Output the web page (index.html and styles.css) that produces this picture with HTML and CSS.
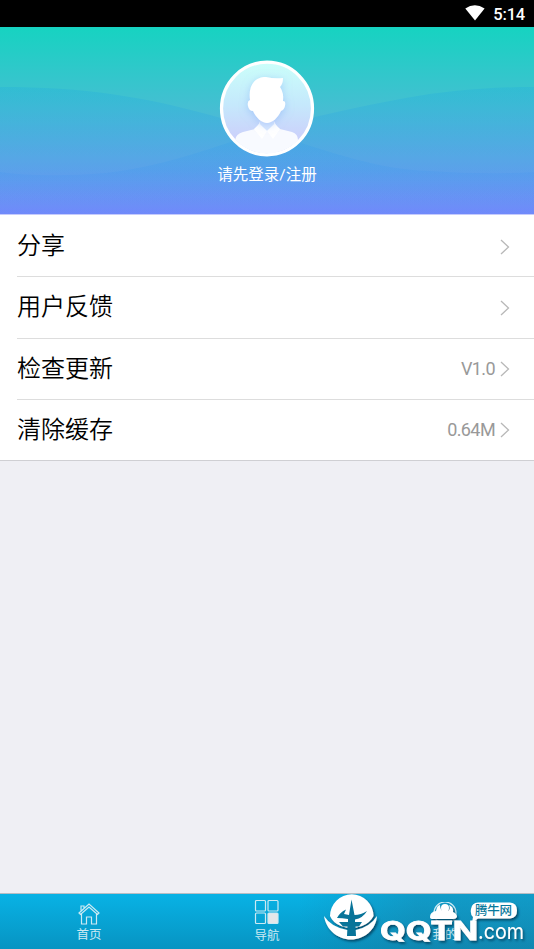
FILE: index.html
```html
<!DOCTYPE html>
<html lang="zh-CN">
<head>
<meta charset="utf-8">
<title>我的</title>
<link rel="stylesheet" href="styles.css">
</head>
<body>
<div class="app">
  <header class="status">
    <svg class="wifi" width="20" height="16" viewBox="0 0 20 16"><path d="M.3 3.6Q9.8-3.2 19.6 3.6L10 15.6z" fill="#fff"/></svg>
    <span>5:14</span>
  </header>
  <section class="profile">
    <svg class="waves" viewBox="0 0 534 188" preserveAspectRatio="none">
      <defs>
        <linearGradient id="wave" x1="0" y1="0" x2="0" y2="1"><stop offset="0" stop-color="#1ba9e0" stop-opacity=".25"/><stop offset=".65" stop-color="#3c98f0" stop-opacity=".2"/><stop offset="1" stop-color="#6f8bfa" stop-opacity=".1"/></linearGradient>
      </defs>
      <path d="M0 60C85 60 145 70 210 88C300 112 360 142 430 144Q485 148 534 145V188H0z" fill="url(#wave)"/>
      <path d="M534 60C440 60 385 75 310 91C220 114 160 148 65 148Q30 149 0 145V188H534z" fill="url(#wave)"/>
    </svg>
    <svg class="avatar" width="96" height="97" viewBox="0 0 96 97">
      <defs>
        <linearGradient id="face" x1="0" y1="0" x2="0" y2="1"><stop offset="0" stop-color="#cbfffa"/><stop offset=".45" stop-color="#c5e9fc"/><stop offset=".8" stop-color="#cbd2fb"/></linearGradient>
        <clipPath id="disc"><ellipse cx="48" cy="48.5" rx="44" ry="45"/></clipPath>
        <filter id="soft" x="-40%" y="-40%" width="180%" height="180%"><feDropShadow dx="0" dy="2" stdDeviation="4" flood-color="#80aaf5" flood-opacity=".5"/></filter>
      </defs>
      <ellipse cx="48" cy="48.500" rx="45.500" ry="46.300" fill="url(#face)" stroke="#fff" stroke-width="3.200"/>
      <g clip-path="url(#disc)">
        <path d="M16 96V80Q17 74 24 72L36 69Q39 67 41 61H55Q58 68 61 69L73 72Q79 74 79 80V96z" fill="#f8faff"/>
        <path d="M41 58h14v6L48 71L41 64z" fill="#d8e7fe"/>
        <path d="M40 64L35 69L43 79L48 71L54 79L61 69L56 64L48 71z" fill="#fff"/>
        <path d="M31 40C29 25 36 17 47 17Q55 19 64 18Q64 24 61 27Q65 33 64 41Q67 41 66 46Q65 50 62 51C59 58 53 63 48 63S37 58 34 51Q30 51 29 46Q28 41 31 40z" fill="#fff" filter="url(#soft)"/>
      </g>
    </svg>
    <p class="login">请先登录/注册</p>
  </section>
  <main class="menu">
    <div class="row"><span>分享</span><svg class="arrow" viewBox="0 0 10 16"><path d="M1 1l7.500 7L1 15"/></svg></div>
    <div class="row"><span>用户反馈</span><svg class="arrow" viewBox="0 0 10 16"><path d="M1 1l7.500 7L1 15"/></svg></div>
    <div class="row"><span>检查更新</span><em>V1.0</em><svg class="arrow" viewBox="0 0 10 16"><path d="M1 1l7.500 7L1 15"/></svg></div>
    <div class="row"><span>清除缓存</span><em>0.64M</em><svg class="arrow" viewBox="0 0 10 16"><path d="M1 1l7.500 7L1 15"/></svg></div>
  </main>
  <nav class="tabs">
    <div class="tab"><svg width="24" height="24" viewBox="0 0 24 24"><path d="M2 11L12 2l10 9-1.500 1.500L12 5l-8.500 7.500zM4.500 12v10h5v-7h5v7h5V12M4 8.500V4h3v2"/></svg><span>首页</span></div>
    <div class="tab nav-tab"><svg width="26" height="26" viewBox="0 0 26 26"><rect x="1.500" y="1.500" width="10" height="10.500" rx="1"/><rect x="14" y="1.500" width="10" height="10.500" rx="1"/><rect x="1.500" y="14" width="10" height="10.500" rx="1"/><rect class="solid" x="14" y="14" width="10" height="10.500" rx="1"/></svg><span>导航</span></div>
    <div class="tab"><svg width="26" height="24" viewBox="0 0 26 24"><circle cx="13" cy="11" r="11"/></svg><span>我的</span></div>
  </nav>
  <svg class="watermark" width="214" height="64" viewBox="320 885 214 64">
    <defs><filter id="shade" x="-10%" y="-10%" width="125%" height="130%"><feDropShadow dx="1.500" dy="2" stdDeviation="1.200" flood-color="#003b58" flood-opacity=".8"/></filter></defs>
    <g fill="#fff" filter="url(#shade)">
      <path d="M330 916A21.500 21.500 0 0 1 373.500 916Q370 923 362 926Q351 930 341 926Q333 923 330 916z"/>
      <path d="M324 916Q331 927 347 930H356Q370 927 377 916C376 930 364 939.500 351 939.500S326 930 324 916z"/>
      <path d="M430 917Q430 912 436 911Q437 905 440 905Q440 910 443 911H448Q451 909 449 905Q454 907 453 912Q457 914 457 917Q456 919 453 919H433Q430 919 430 917z"/>
      <circle cx="445" cy="908" r="4"/>
      <path d="M478 902.500H510Q517 903 517 910.500T510 918.500H478L472 923L473 917Q470 914 471 909Q472 902.500 478 902.500z"/>
      <text class="brand" x="380" y="939.500" textLength="98" lengthAdjust="spacingAndGlyphs">QQTN</text>
      <text class="domain" x="478" y="939" textLength="46" lengthAdjust="spacingAndGlyphs">.com</text>
    </g>
    <path class="mast" d="M351.500 899.500L354.500 915Q361 915 367 911Q363 918 355 919.500V922H362L359 926.500H355.500L356 936H347L347.500 926.500H343L339 922H348V919Q342 918 337 918Q340 912 346 909.500L344 914L349 915z"/>
    <text class="brand-cn" x="475" y="915" textLength="37">腾牛网</text>
  </svg>
</div>
</body>
</html>
```
FILE: styles.css
```css
body { margin: 0; }
.app {
  position: relative;
  display: flex;
  flex-direction: column;
  width: 534px;
  height: 949px;
  overflow: hidden;
  background: #efeff4;
  font-family: Roboto, "Noto Sans CJK SC", sans-serif;
}
.status {
  display: flex;
  align-items: center;
  justify-content: flex-end;
  gap: 8px;
  box-sizing: border-box;
  height: 27px;
  padding: 2px 9px 0 0;
  background: #000;
  color: #fff;
  font-size: 16.500px;
  font-weight: 500;
  letter-spacing: -.2px;
}
.wifi { margin-top: -3px; }
.profile {
  position: relative;
  display: flex;
  flex-direction: column;
  align-items: center;
  box-sizing: border-box;
  height: 188px;
  padding-top: 33px;
  background: linear-gradient(#16d3c1, #44bfd2 42%, #60a8e5 72%, #7189fb);
}
.waves { position: absolute; inset: 0; width: 100%; height: 100%; }
.avatar, .login { position: relative; }
.login {
  margin: 7px 0 0;
  color: #fff;
  font-size: 15.500px;
  line-height: 22px;
}
.menu {
  display: flex;
  flex-direction: column;
  height: 245px;
  background: #fff;
  box-shadow: 0 -1px #c5cbfc, 0 1px #cfcfd3;
  z-index: 1;
}
.row {
  display: flex;
  flex: 1;
  align-items: center;
  margin-left: 17px;
  padding-right: 24px;
  border-top: 1px solid #ddd;
  color: #000;
  font-size: 24px;
  font-weight: 350;
}
.row:first-child { border-color: transparent; }
.row span { line-height: 36px; }
.row em {
  margin: 0 5px 0 auto;
  color: #999;
  font-size: 18px;
  line-height: 22px;
  letter-spacing: -.6px;
  font-style: normal;
  font-weight: 400;
}
.arrow { width: 10px; height: 16px; margin-top: 1px; }
span + .arrow { margin-left: auto; }
.arrow path { fill: none; stroke: #b8b8b8; stroke-width: 1.300; }
.tabs {
  display: grid;
  grid-template-columns: repeat(3, 1fr);
  height: 55px;
  margin-top: auto;
  background:
    linear-gradient(90deg, transparent 56%, rgba(38, 105, 135, .3) 78%),
    linear-gradient(#08b2e5, #0794c2);
  box-shadow: 0 -1px #b5bdc4;
}
.tab {
  display: flex;
  flex-direction: column;
  align-items: center;
  padding-top: 8px;
  color: #cceaf3;
  font-size: 12.500px;
  line-height: 18px;
}
.nav-tab { padding-top: 5px; line-height: 21px; }
.tab svg { fill: none; stroke: #cceaf3; stroke-width: 1.200; }
.tab .solid { fill: #e4e7e9; }
.watermark { position: absolute; right: 0; bottom: 0; z-index: 2; }
.mast { fill: #087499; }
.brand { font: 700 25px Inter, sans-serif; stroke: #fff; stroke-width: .8; }
.domain { font: 400 22px Inter, sans-serif; }
.brand-cn { fill: #08799c; font: 500 12.500px "Noto Sans CJK SC", sans-serif; }
```
